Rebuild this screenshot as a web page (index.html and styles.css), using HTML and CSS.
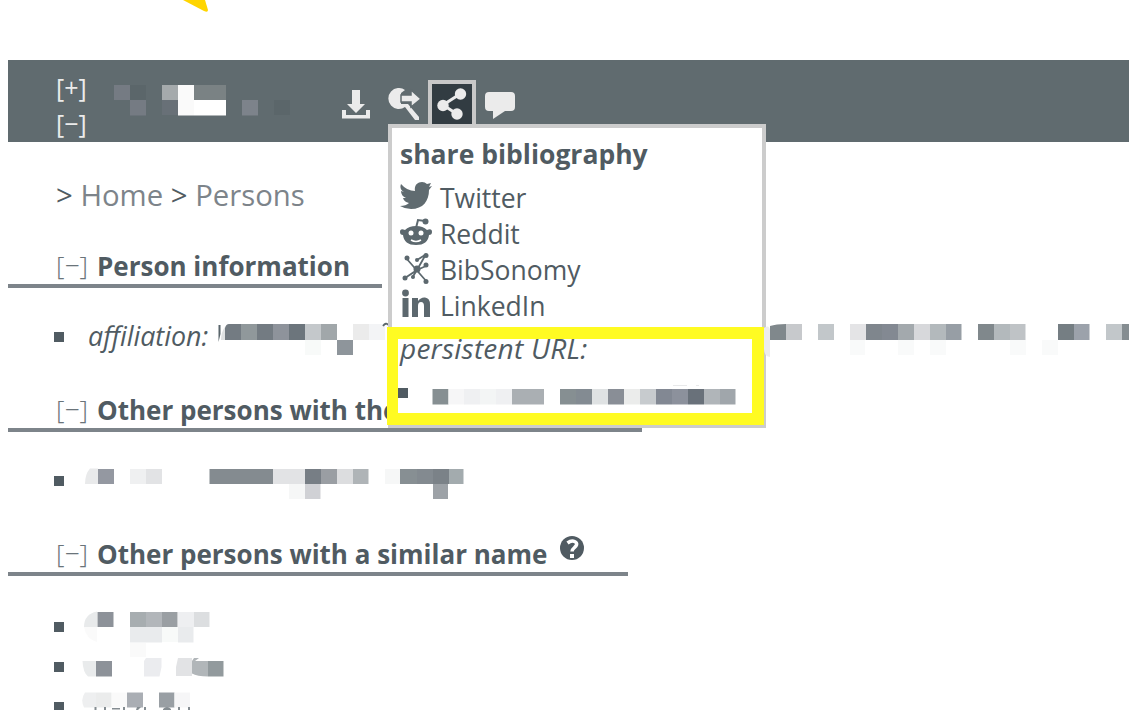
FILE: index.html
```html
<!DOCTYPE html>
<html lang="en">
<head>
<meta charset="utf-8">
<title>Person bibliography</title>
<link rel="stylesheet" href="styles.css">
</head>
<body>
<div class="top"><svg class="pointer" width="30" height="14" viewBox="180 0 30 14"><path fill="#ffd500" d="M183 0H205L208 10Q208 13 204 11Z"/></svg></div>
<header class="headline">
  <div class="toggles"><span>[+]</span><span>[−]</span></div>
  <svg class="name" width="200" height="82" viewBox="98 60 200 82">
    <path fill="#757b83" d="M114 85h16v15h-16zM130 100h16v15.500h-16z"/><path fill="#5b666a" d="M130 85h16v15h-16zM274 100h16v15h-16z"/>
    <path fill="#a5aaac" d="M162 85h16v15h-16z"/><path fill="#687077" d="M162 100h16v15h-16z"/><path fill="#7a8284" d="M194 85h32v15h-32z"/>
    <path fill="#fafafa" d="M178 85h16v30.500h-16z"/><path fill="#fff" d="M194 100h32v15.500h-32z"/><path fill="#7d838b" d="M242 100h16v15.500h-16z"/>
  </svg>
  <nav class="actions">
    <span class="action"><svg width="32" height="32" viewBox="340 88 32 32"><path fill="#ebebeb" d="M352 90h8v14h5l-9 9-9-9h5zM342 110h4v5h20v-5h4v8.500h-28z"/></svg></span>
    <span class="action"><svg width="32" height="32" viewBox="388 88 32 32"><path fill="#ebebeb" d="M405 90a10.500 10.500 0 1 0 0 17l10 13h4v-3l-11-13h-7v-11z"/><path fill="#ebebeb" stroke="#606b6f" stroke-width="1.500" d="M401 95h10v-5l10 9-10 8v-5h-10z"/></svg></span>
    <span class="action active"><svg width="32" height="32" viewBox="436 88 32 32"><path stroke="#ebebeb" stroke-width="3" fill="none" d="M460 94l-17 11 14 9"/><g fill="#ebebeb"><circle cx="460.500" cy="94" r="5.700"/><circle cx="443" cy="105.500" r="5.700"/><circle cx="457" cy="114" r="5.700"/></g></svg></span>
    <span class="action"><svg width="32" height="32" viewBox="484 88 32 32"><path fill="#ebebeb" d="M489 92h22q4 0 4 4v11q0 4-4 4h-6l-12 8v-8h-4q-4 0-4-4V96q0-4 4-4z"/></svg></span>
  </nav>
  <div class="popup">
    <h3>share bibliography</h3>
    <ul class="services">
      <li><svg width="32" height="32" viewBox="0 0 32 32"><path fill="#606b70" d="M1 3q6 7 14 7c-1-5 2-9 7-9q3 0 5 2l4-1-2 4 3-1-3 4C29 20 23 28 11 28q-6 0-11-3 6 0 9-3-5-1-6-5h3q-5-2-5-7l3 1Q-1 8 1 3z"/></svg>Twitter</li>
      <li><svg width="32" height="32" viewBox="0 0 32 32"><path fill="none" stroke="#5c686e" stroke-width="2" d="M16 11l2-8 7 1"/><circle cx="25.500" cy="4.500" r="3" fill="#5c686e"/><path fill="#5c686e" d="M5 13Q9 9 16 9t11 4q5-2 5 2 0 3-3 3-1 10-13 10T3 18q-3 0-3-3 0-4 5-2z"/><circle cx="11" cy="16" r="2.500" fill="#fff"/><circle cx="21" cy="16" r="2.500" fill="#fff"/><path fill="none" stroke="#fff" stroke-width="1.500" d="M11 23q5 3 10 0"/></svg>Reddit</li>
      <li><svg width="32" height="32" viewBox="0 0 32 32"><path fill="none" stroke="#5c686e" stroke-width="1.800" d="M6 5l21 24M5 25l12-8 9-16M17 7l8-5M17 17l9-4M17 17l-5 8"/><g fill="#5c686e"><circle cx="17" cy="16" r="3.500"/><circle cx="7" cy="5" r="2.500"/><circle cx="26" cy="2.500" r="2.500"/><circle cx="17" cy="7" r="2"/><circle cx="26" cy="12" r="2.500"/><circle cx="5" cy="25" r="2.500"/><circle cx="13" cy="24" r="2"/><circle cx="26" cy="28.500" r="2.500"/></g></svg>BibSonomy</li>
      <li><svg width="32" height="32" viewBox="0 0 32 32"><g fill="#5c686e"><circle cx="5.500" cy="4" r="3.400"/><path d="M2.500 9h6v19h-6zM12 9h6v3q3-4 7-3.500 5 .5 5 7V28h-6V17q0-4-3-4t-3 4v11h-6z"/></g></svg>LinkedIn</li>
    </ul>
    <p class="url-label">persistent URL:</p>
    <div class="url"><i class="square"></i><svg width="308" height="22" viewBox="430 384 308 22">
      <path fill="#868f92" d="M432.500 389h16v15.500h-16zM560 389h16v15.500h-16z"/><path fill="#f6f6f7" d="M448.500 389h16v15.500h-16z"/><path fill="#eff0f2" d="M464 389h16v15.500h-16zM496 389h16v15.500h-16z"/><path fill="#f3f5f5" d="M480 389h16v15.500h-16z"/><path fill="#aaafb3" d="M512 389h32v15.500h-32z"/><path fill="#838b92" d="M576 389h16v15.500h-16z"/><path fill="#dfe2e3" d="M592 389h16v15.500h-16z"/><path fill="#898e96" d="M608 389h16v15.500h-16z"/><path fill="#ebeceb" d="M624 389h16v15.500h-16z"/><path fill="#c7cbce" d="M640 389h16v15.500h-16z"/><path fill="#828893" d="M656 389h16v15.500h-16z"/><path fill="#8c919c" d="M672 389h16v15.500h-16z"/><path fill="#69717a" d="M688 389h16v15.500h-16z"/><path fill="#b0b5b9" d="M704 389h16v15.500h-16z"/><path fill="#a0a6ab" d="M720 389h15.500v15.500h-15.500z"/><path fill="#e8e9ea" d="M673 385h14v1h-14zM696 385h3v1h-3z"/></svg></div>
    <div class="highlight"></div>
  </div>
</header>
<main>
  <p class="crumbs">&gt; <a>Home</a> &gt; <a>Persons</a></p>
  <h2 class="person"><span class="fold">[−]</span><span class="t1">Person information</span></h2>
  <ul class="list">
    <li><i class="square"></i><em>affiliation:</em>
      <svg class="aff" width="170" height="40" viewBox="218 317 170 40"><path fill="#59656b" d="M218.500 325h2v9l-2 8z"/>
      <path fill="#737b82" d="M225 340v-12q1-4 4-4h12v16zM257 324h16v16h-16z"/><path fill="#dfe1e2" d="M221 340q0-8 4-13v13z"/><path fill="#90989b" d="M241 324h16v16h-16z"/><path fill="#8e939b" d="M273 324h16v16h-16z"/><path fill="#6c757c" d="M289 324h16v16h-16z"/><path fill="#c4c8cb" d="M305 324h16v16h-16z"/><path fill="#a1a7aa" d="M321 324h16v16h-16z"/><path fill="#8e959b" d="M337 340h16v15h-16z"/><path fill="#ebebeb" d="M353 324h16v16h-16z"/><path fill="#f3f4f6" d="M369 324h16v16h-16z"/><path fill="#f8faf9" d="M305 340h16v15h-16z"/><path stroke="#59656b" stroke-width="1.800" fill="none" d="M383 326q3-4 5-1"/></svg>
      <svg class="over" width="365" height="40" viewBox="764 317 365 40"><path fill="#ececed" d="M764 328q5-4 6 2v27q-6-1-6-8z"/>
      <path fill="#80888c" d="M770 326q6-2 16-2v16h-16zM978 324h16v16h-16z"/><path fill="#c7c9cc" d="M786 324h16v16h-16z"/><path fill="#c2c7ca" d="M818 324h16v16h-16zM1106 324h16v16h-16z"/><path fill="#e4e4e6" d="M850 324h16v16h-16z"/><path fill="#7f868d" d="M866 324h16v16h-16z"/><path fill="#838992" d="M882 324h16v16h-16z"/><path fill="#a3a9ad" d="M898 324h16v16h-16z"/><path fill="#d7d8db" d="M914 324h16v16h-16z"/><path fill="#b3b9bc" d="M930 324h16v16h-16zM994 324h16v16h-16z"/><path fill="#979ea5" d="M946 324h15.500v16h-15.500z"/><path fill="#bfc3c6" d="M1010 324h15.500v16h-15.500z"/><path fill="#757e83" d="M1058 324h16v16h-16z"/><path fill="#9ca2ab" d="M1074 324h15.500v16h-15.500z"/><path fill="#858d91" d="M1122 324h7v16h-7z"/><path fill="#f9fafa" d="M850 340h15v15h-15zM898 340h16v15h-16zM930 340h16v15h-16zM1010 340h16v15h-16zM1042 340h16v15h-16z"/></svg>
    </li>
  </ul>
  <h2 class="same"><span class="fold">[−]</span><span class="t2">Other persons with the same name</span></h2>
  <ul class="list">
    <li><i class="square"></i><svg class="entry" width="384" height="40" viewBox="82 461 384 40">
      <path fill="#e9eaeb" d="M85 484q0-10 5-15.500h8V484z"/><path fill="#9498a1" d="M98 469h16v15H98z"/><path fill="#eff0f1" d="M130 469h16v15h-16z"/><path fill="#e2e3e5" d="M146 469h16v15h-16zM273 469h32v15h-32z"/><path fill="#848b90" d="M209.500 469H273v15h-63.500z"/><path fill="#777e85" d="M305 469h16v15h-16z"/><path fill="#9a9ea3" d="M321 469h16v15h-16z"/><path fill="#dcdddf" d="M337 469h16v15h-16z"/><path fill="#afb4b7" d="M353 469h15.500v15H353z"/><path fill="#f6f7f7" d="M385 469h15v15h-15zM289 484h16v15h-16z"/><path fill="#878f93" d="M400 469h17v15h-17z"/><path fill="#838a90" d="M417 469h16v15h-16z"/><path fill="#7b8288" d="M433 469h16v15h-16z"/><path fill="#a3abae" d="M449 469h14.500v15H449z"/><path fill="#d0d1d5" d="M305 484h15.500v15H305z"/><path fill="#9da2a7" d="M433 484h15v15h-15z"/></svg></li>
  </ul>
  <h2 class="similar"><span class="fold">[−]</span><span class="t3">Other persons with a similar name</span><svg class="help" width="26" height="26" viewBox="0 0 26 26"><circle cx="13" cy="13" r="12" fill="#505b62"/><path fill="none" stroke="#fff" stroke-width="3.500" d="M8.500 8q4-3 7-1.500c4 2 1.500 4.500 0 6q-2.500 2-2.500 4"/><path fill="#fff" d="M11 19h4v4h-4z"/></svg></h2>
  <ul class="list">
    <li><i class="square"></i><svg class="entry tall" width="150" height="50" viewBox="82 607 150 50"><path fill="#e8eaeb" d="M84 627q0-13 13-15.500V627z"/><path fill="#fafafa" d="M84 627h13v15q-11-3-13-15zM130 643h16v15h-16z"/><path fill="#8d9299" d="M97.500 612h16v15h-16z"/><path fill="#a7adb0" d="M130 612h16v15h-16z"/><path fill="#b2b6ba" d="M146 612h16v15h-16z"/><path fill="#9a9fa3" d="M162 612h15.500v15H162z"/><path fill="#eeeff1" d="M178 612h16v15h-16z"/><path fill="#dcdee0" d="M194 612h15.500v15H194z"/><path fill="#e9ebed" d="M130 627h32v15.500h-32zM178 627h15.500v15.500H178z"/><path fill="#f8faf9" d="M162 627h16v15h-16z"/></svg></li>
    <li><i class="square"></i><svg class="entry" width="150" height="40" viewBox="82 647 150 40"><path fill="#e9ebec" d="M82.500 661H96v15.500h-8q-5-4-5.500-15.500z"/><path fill="#8d9299" d="M96 661h16v15.500H96z"/><path fill="#ebecef" d="M146 658h15.500v9l-2 9.500H144V661z"/><path fill="#e2e3e5" d="M178 658h14v18h-16v-9z"/><path fill="#b1b6b9" d="M194 658h5l-4 3h13v15.500q-11 0-16-3V661z"/><path fill="#929a9d" d="M208 661h15.500v15.500H208z"/></svg></li>
    <li><i class="square"></i><svg class="entry" width="150" height="40" viewBox="82 687 150 40"><path fill="#eeeff0" d="M85 692.500h11v15H84q-4-8 1-15z"/><path fill="#ebecec" d="M96 692.500h15.500v15H96z"/><path fill="#fafafa" d="M112 692.500h15v15h-15z"/><path fill="#aaaeb4" d="M127 692.500h16v15h-16z"/><path fill="#999fa4" d="M159 692.500h15.500v15H159z"/><path fill="#f6f6f7" d="M174.500 692.500H190v15h-15.500z"/><path fill="#858d92" d="M94.500 707h2v3h-2zM104 707h2v3h-2zM112 708h8v1.500h-8zM123 707h2v3h-2zM137 707h4l-3 3h-2zM144 707h2v3h-2zM163 709q4-4 8 0v1h-8zM178 707h2v3h-2zM188 707h2v3h-2z"/></svg></li>
  </ul>
</main>
</body>
</html>
```
FILE: styles.css
```css
* { box-sizing: border-box; }
body { margin: 0; padding-left: 8px; height: 710px; overflow: hidden; background: #fff; color: #505b62; font: 26px/36px "Open Sans", sans-serif; }
h2, h3, p, ul { margin: 0; padding: 0; }
ul { list-style: none; }
svg { display: block; flex: none; }
main { height: 568px; overflow: hidden; }
.top { height: 60px; padding-left: 172px; }
.headline { position: relative; display: flex; height: 82px; background: #606b6f; color: #ebebeb; }
.toggles { width: 90px; padding: 9px 0 0 48px; display: flex; flex-direction: column; font-size: 25px; }
.actions { display: flex; padding: 20px 0 0 34px; }
.action { width: 48px; height: 48px; padding: 8px; }
.active { padding: 4px; border: 4px solid #c8c8c8; background: #323c42; }
.popup { position: absolute; z-index: 2; left: 380px; top: 64px; width: 378px; height: 304px; border: 4px solid #ccc; padding: 8px; background: #fff; color: #505b62; }
h3 { font-size: 26.5px; line-height: 36px; margin-bottom: 8px; white-space: nowrap; }
.services li { display: flex; gap: 8px; height: 36px; font-size: 26.5px; }
.services svg { margin-top: 1px; }
.url-label { font-size: 28px; letter-spacing: .25px; font-style: italic; margin-top: 6px; }
.url { display: flex; margin: 18px 0 0 -2px; gap: 22px; align-items: flex-start; }
.square { flex: none; width: 10px; height: 10px; background: #505b62; }
.url .square { margin-top: 4px; }
.highlight { position: absolute; left: -5px; top: 199px; width: 377px; height: 98px; border: 12px solid #fffb22; border-left-width: 11px; }
.crumbs { height: 106px; padding: 28px 0 0 48px; font-size: 29.3px; line-height: 50px; }
.crumbs a { color: #7d848a; }
h2 { display: flex; height: 40px; padding-left: 48px; border-bottom: 4px solid #7d848a; font-size: 26px; line-height: 36px; white-space: nowrap; }
.fold { width: 41px; font-size: 26.5px; line-height: 34px; font-weight: 300; color: #6a747a; }
.person { width: 374px; }
.same { width: 634px; }
.similar { width: 620px; }
.help { margin: -1px 0 0 12px; }
.list { padding: 29px 0 35px 46px; }
.similar + .list { padding-top: 31px; }
.list li { display: flex; align-items: center; height: 40px; }
.list em { width: 130px; margin-left: 24px; font-size: 26.8px; line-height: 34px; padding-bottom: 2px; }
.aff { margin-right: 376px; }
.over { position: relative; z-index: 3; }
.entry { margin-left: 18px; }
.tall { margin-top: 10px; }
```
